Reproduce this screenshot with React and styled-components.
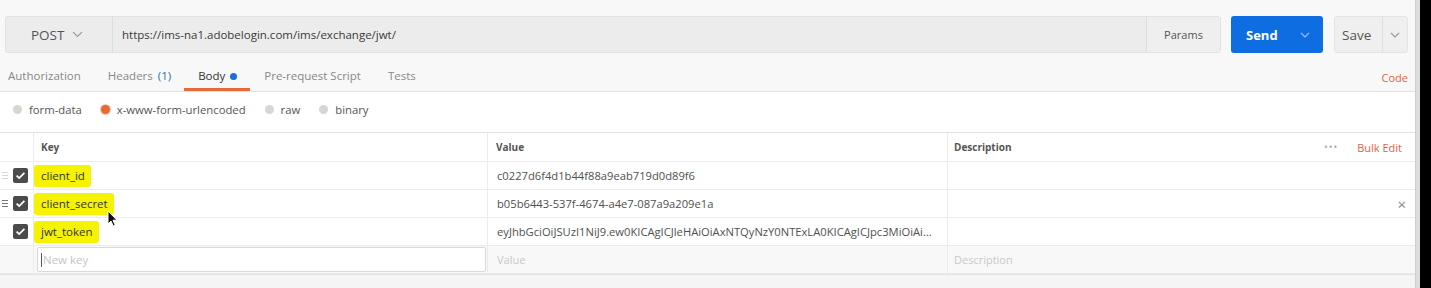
import React from "react";
import styled, { createGlobalStyle } from "styled-components";

const GlobalStyle = createGlobalStyle`
  html, body { margin: 0; padding: 0; background: #000; }
  body { font-family: "Open Sans", "Liberation Sans", sans-serif; font-size: 11px; color: #505050; }
  * { box-sizing: border-box; }
`;

const Page = styled.div`
  position: relative;
  display: flex;
  width: 1431px;
  height: 288px;
  background: #000;
  overflow: hidden;
`;

const Main = styled.div`
  width: 1415px;
  display: flex;
  flex-direction: column;
  background: #fff;
`;

const Gutter = styled.div`
  width: 5px;
  background: #dcdcdc;
  border-left: 1px solid #cfcfcf;
`;

const Header = styled.div`
  background: #f8f8f8;
  padding-top: 16px;
  border-bottom: 1px solid #e2e2e2;
`;

const UrlRow = styled.div`
  display: flex;
  height: 37px;
  padding: 0 7px 0 5px;
`;

const UrlBar = styled.div`
  flex: 1;
  display: flex;
  background: #ececec;
  border: 1px solid #e2e2e2;
  border-radius: 3px;
`;

const Method = styled.div`
  width: 107px;
  display: flex;
  align-items: center;
  gap: 8px;
  padding-left: 25px;
  border-right: 1px solid #dedede;
  font-size: 13.5px;
  color: #555;
`;

const UrlText = styled.div`
  flex: 1;
  display: flex;
  align-items: center;
  padding-left: 9px;
  font-size: 11.5px;
  color: #3a3a3a;
`;

const Params = styled.div`
  width: 74px;
  display: flex;
  align-items: center;
  justify-content: center;
  border-left: 1px solid #dedede;
  background: #efefef;
  color: #555;
`;

const SendButton = styled.div`
  width: 92px;
  margin-left: 10px;
  display: flex;
  align-items: center;
  justify-content: space-between;
  padding: 0 13px 0 15px;
  background: #0e6de0;
  border-radius: 3px;
  color: #fff;
  font-size: 13px;
  font-weight: 700;
`;

const SaveButton = styled.div`
  width: 74px;
  margin-left: 11px;
  display: flex;
  background: #efefef;
  border: 1px solid #e4e4e4;
  border-radius: 3px;
  font-size: 13.5px;
  color: #555;
`;

const SaveLabel = styled.div`
  width: 47px;
  display: flex;
  align-items: center;
  padding-left: 7px;
`;

const SaveCaret = styled.div`
  flex: 1;
  display: flex;
  align-items: center;
  justify-content: center;
  border-left: 1px solid #e0e0e0;
`;

const TabBar = styled.div`
  display: flex;
  align-items: flex-start;
  height: 38px;
  padding-right: 7px;
`;

const Tab = styled.div`
  height: 38px;
  padding: 15px 13px 0 14px;
  line-height: 15px;
  font-size: 11.5px;
  color: ${(p) => (p.$active ? "#333" : "#888")};
  border-bottom: 3px solid ${(p) => (p.$active ? "#e4693b" : "transparent")};
  display: flex;
  gap: 5px;
  &:first-child { padding-left: 8px; }
`;

const Count = styled.span`
  color: #2f6db5;
`;

const Dot = styled.span`
  width: 7px;
  height: 7px;
  margin-top: 5px;
  border-radius: 50%;
  background: #1a6fd8;
`;

const CodeLink = styled.div`
  margin-left: auto;
  padding-top: 17px;
  line-height: 15px;
  color: #e0643f;
`;

const RadioRow = styled.div`
  display: flex;
  align-items: center;
  gap: 19px;
  height: 40px;
  padding: 0 0 6px 13px;
`;

const RadioItem = styled.label`
  display: flex;
  align-items: center;
  gap: 7px;
  color: #555;
  font-size: 11.3px;
`;

const RadioDot = styled.span`
  width: 9px;
  height: 9px;
  border-radius: 50%;
  background: ${(p) => (p.$checked ? "#e66a35" : "#d6d6d6")};
  box-shadow: ${(p) => (p.$checked ? "0 0 0 1px #f6c9b3" : "none")};
`;

const Table = styled.div`
  display: grid;
  grid-template-columns: 33px 454px 460px 1fr;
  border-top: 1px solid #e2e2e2;
`;

const Cell = styled.div`
  height: ${(p) => (p.$head ? "29px" : "28px")};
  display: flex;
  align-items: center;
  padding-left: ${(p) => p.$pad ?? 8}px;
  border-bottom: 1px solid #ececec;
  border-left: ${(p) => (p.$first ? "none" : "1px solid #ececec")};
  background: ${(p) => (p.$muted ? "#f8f8f8" : "#fff")};
  white-space: nowrap;
  overflow: hidden;
`;

const HeadLabel = styled.span`
  font-size: 10px;
  font-weight: 700;
  color: #555;
`;

const Actions = styled.div`
  margin-left: auto;
  display: flex;
  align-items: center;
  gap: 19px;
  padding-right: 13px;
`;

const More = styled.span`
  color: #aaa;
  letter-spacing: 1px;
  font-size: 10px;
`;

const BulkEdit = styled.span`
  color: #e0643f;
  font-size: 11px;
`;

const Highlight = styled.span`
  display: inline-block;
  height: 22px;
  line-height: 22px;
  padding: 0 6px 0 7px;
  background: #f6f300;
  border-radius: 3px;
  color: #333;
  font-size: 11.5px;
`;

const ValueText = styled.span`
  display: block;
  max-width: 100%;
  overflow: hidden;
  text-overflow: ellipsis;
  padding-right: 10px;
  color: #505050;
  font-size: 11.2px;
`;

const Handle = styled.div`
  width: 6px;
  display: flex;
  flex-direction: column;
  gap: 2px;
  margin-right: 5px;
  & > i {
    display: block;
    height: 1px;
    background: ${(p) => (p.$strong ? "#777" : p.$faint ? "#d8d8d8" : "transparent")};
  }
`;

const Remove = styled.span`
  margin-left: auto;
  padding-right: 9px;
  color: #888;
  font-size: 15px;
`;

const KeyInput = styled.div`
  height: 25px;
  width: 449px;
  display: flex;
  align-items: center;
  padding-left: 3px;
  background: #fff;
  border: 1px solid #d9d9d9;
  border-radius: 2px;
  color: #c4c4c4;
  font-size: 11.5px;
  &::before {
    content: "";
    width: 1px;
    height: 14px;
    margin-right: 1px;
    background: #555;
  }
`;

const Placeholder = styled.span`
  color: #c8c8c8;
`;

const Footer = styled.div`
  flex: 1;
  background: #f5f5f5;
  border-top: 1px solid #e2e2e2;
`;

const Cursor = styled.svg`
  position: absolute;
  left: 107px;
  top: 210px;
`;

const Chevron = ({ color = "#999", size = 10 }) => (
  <svg width={size} height={size * 0.6} viewBox="0 0 10 6">
    <path d="M1 1l4 4 4-4" fill="none" stroke={color} strokeWidth="1.1" />
  </svg>
);

const Check = () => (
  <svg width="15" height="15" viewBox="0 0 15 15">
    <rect width="15" height="15" rx="2" fill="#4b4b4b" />
    <path d="M3.6 7.6l2.6 2.5 5.2-5.3" fill="none" stroke="#fff" strokeWidth="1.8" />
  </svg>
);

const rows = [
  { key: "client_id", value: "c0227d6f4d1b44f88a9eab719d0d89f6", handle: "faint" },
  { key: "client_secret", value: "b05b6443-537f-4674-a4e7-087a9a209e1a", handle: "strong", remove: true },
  {
    key: "jwt_token",
    value: "eyJhbGciOiJSUzI1NiJ9.ew0KICAgICJleHAiOiAxNTQyNzY0NTExLA0KICAgICJpc3MiOiAi…",
  },
];

export default function App() {
  return (
    <Page>
      <GlobalStyle />
      <Main>
        <Header>
          <UrlRow>
            <UrlBar>
              <Method>
                POST <Chevron size={11} />
              </Method>
              <UrlText>https://ims-na1.adobelogin.com/ims/exchange/jwt/</UrlText>
              <Params>Params</Params>
            </UrlBar>
            <SendButton>
              Send <Chevron color="#9cc3f3" />
            </SendButton>
            <SaveButton>
              <SaveLabel>Save</SaveLabel>
              <SaveCaret>
                <Chevron />
              </SaveCaret>
            </SaveButton>
          </UrlRow>
          <TabBar>
            <Tab>Authorization</Tab>
            <Tab>
              Headers <Count>(1)</Count>
            </Tab>
            <Tab $active>
              Body <Dot />
            </Tab>
            <Tab>Pre-request Script</Tab>
            <Tab>Tests</Tab>
            <CodeLink>Code</CodeLink>
          </TabBar>
        </Header>

        <RadioRow>
          <RadioItem><RadioDot />form-data</RadioItem>
          <RadioItem><RadioDot $checked />x-www-form-urlencoded</RadioItem>
          <RadioItem><RadioDot />raw</RadioItem>
          <RadioItem><RadioDot />binary</RadioItem>
        </RadioRow>

        <Table>
          <Cell $head $first />
          <Cell $head $pad={7}><HeadLabel>Key</HeadLabel></Cell>
          <Cell $head $pad={8}><HeadLabel>Value</HeadLabel></Cell>
          <Cell $head $pad={6}>
            <HeadLabel>Description</HeadLabel>
            <Actions>
              <More>•••</More>
              <BulkEdit>Bulk Edit</BulkEdit>
            </Actions>
          </Cell>

          {rows.map((r) => (
            <React.Fragment key={r.key}>
              <Cell $first $pad={2}>
                <Handle $faint={r.handle === "faint"} $strong={r.handle === "strong"}>
                  <i /><i /><i />
                </Handle>
                <Check />
              </Cell>
              <Cell $pad={0}><Highlight>{r.key}</Highlight></Cell>
              <Cell $pad={9}><ValueText>{r.value}</ValueText></Cell>
              <Cell $pad={6}>{r.remove && <Remove>×</Remove>}</Cell>
            </React.Fragment>
          ))}

          <Cell $first $muted />
          <Cell $pad={3} $muted><KeyInput>New key</KeyInput></Cell>
          <Cell $pad={9} $muted><Placeholder>Value</Placeholder></Cell>
          <Cell $pad={6} $muted><Placeholder>Description</Placeholder></Cell>
        </Table>
        <Footer />
      </Main>
      <Gutter />
      <Cursor width="11" height="17" viewBox="0 0 11 17">
        <path d="M1 1v13l3-3 2.2 5 2-1-2.2-4.8H10z" fill="#111" stroke="#fff" strokeWidth="1" />
      </Cursor>
    </Page>
  );
}
